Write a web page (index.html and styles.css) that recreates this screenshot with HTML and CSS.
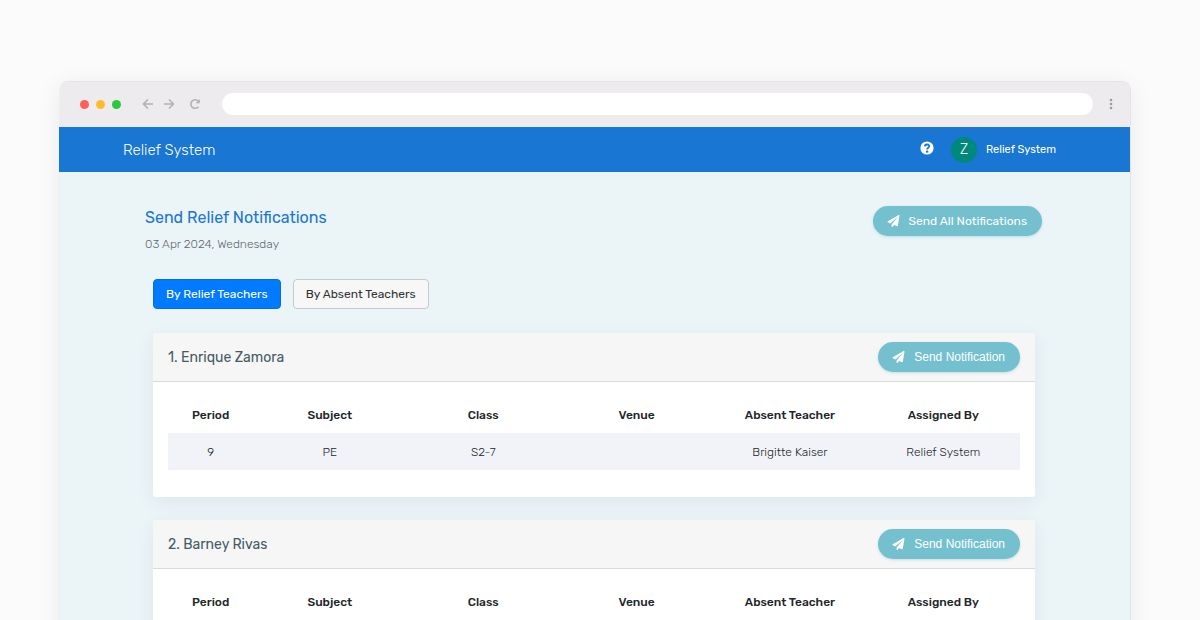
FILE: index.html
```html
<!DOCTYPE html>
<html lang="en">
<head>
<meta charset="utf-8">
<meta name="viewport" content="width=device-width, initial-scale=1">
<title>Relief System</title>
<link rel="stylesheet" href="styles.css">
</head>
<body>
<svg class="symbols" aria-hidden="true">
  <symbol id="plane" viewBox="0 0 512 512"><path fill="currentColor" d="M476 3.200 12.500 270.600c-18.100 10.400-15.800 35.600 2.200 43.200L121 358.400l287.300-253.200c5.500-4.900 13.300 2.600 8.600 8.300L176 407v80.500c0 23.600 28.500 32.900 42.500 15.800L282 426l124.600 52.200c14.200 6 30.400-2.900 33-18.200l72-432C515 7.800 493.300-6.800 476 3.200z"/></symbol>
</svg>
<div class="window">
  <div class="chrome">
    <div class="lights"><span class="light red"></span><span class="light yellow"></span><span class="light green"></span></div>
    <div class="controls">
      <button class="control" aria-label="Back"><svg viewBox="0 0 12 12"><path d="M11 6H2M6 1.500 1.500 6 6 10.500"/></svg></button>
      <button class="control" aria-label="Forward"><svg viewBox="0 0 12 12"><path d="M1 6h9M6 1.500 10.500 6 6 10.500"/></svg></button>
      <button class="control reload" aria-label="Reload"><svg viewBox="0 0 12 12"><path d="M9.500 8.700A4.300 4.300 0 1 1 9.200 3"/><path class="solid" d="M10.800 1v4.200H6.600z"/></svg></button>
    </div>
    <input class="address" type="text" aria-label="Address">
    <button class="menu" aria-label="Menu"><svg viewBox="0 0 4 12"><circle cx="2" cy="2" r="1.300"/><circle cx="2" cy="6" r="1.300"/><circle cx="2" cy="10" r="1.300"/></svg></button>
  </div>
  <header class="navbar">
    <a class="brand" href="#">Relief System</a>
    <div class="account">
      <a class="help" href="#" aria-label="Help"><svg viewBox="0 0 14 14"><circle cx="7" cy="7" r="6.600" fill="#fff"/><path d="M4.800 5.400C5 2.900 9.400 2.900 9.300 5.300 9.200 6.800 7.100 6.700 7.100 8.500" fill="none" stroke="#1976d2" stroke-width="1.800"/><circle cx="7.100" cy="10.600" r="1.200" fill="#1976d2"/></svg></a>
      <span class="avatar">Z</span>
      <span class="user">Relief System</span>
    </div>
  </header>
  <main class="content">
    <div class="heading">
      <div>
        <h1 class="title">Send Relief Notifications</h1>
        <p class="date">03 Apr 2024, Wednesday</p>
      </div>
      <button class="send send-all"><svg><use href="#plane"/></svg>Send All Notifications</button>
    </div>
    <div class="tabs">
      <button class="tab active">By Relief Teachers</button>
      <button class="tab">By Absent Teachers</button>
    </div>
    <section class="card">
      <div class="card-head">
        <h2 class="name">1. Enrique Zamora</h2>
        <button class="send"><svg><use href="#plane"/></svg>Send Notification</button>
      </div>
      <div class="card-body">
        <table class="table">
          <thead><tr><th class="narrow">Period</th><th>Subject</th><th>Class</th><th>Venue</th><th>Absent Teacher</th><th>Assigned By</th></tr></thead>
          <tbody><tr><td>9</td><td>PE</td><td>S2-7</td><td></td><td>Brigitte Kaiser</td><td>Relief System</td></tr></tbody>
        </table>
      </div>
    </section>
    <section class="card">
      <div class="card-head">
        <h2 class="name">2. Barney Rivas</h2>
        <button class="send"><svg><use href="#plane"/></svg>Send Notification</button>
      </div>
      <div class="card-body">
        <table class="table">
          <thead><tr><th class="narrow">Period</th><th>Subject</th><th>Class</th><th>Venue</th><th>Absent Teacher</th><th>Assigned By</th></tr></thead>
        </table>
      </div>
    </section>
  </main>
</div>
</body>
</html>
```
FILE: styles.css
```css
* { box-sizing: border-box; }
body {
  margin: 0;
  height: 100vh;
  overflow: hidden;
  padding: 81px 69px 0 59px;
  background: #fbfbfb;
  font-family: Rubik, Roboto, sans-serif;
  font-size: 13px;
  font-weight: 300;
  color: #212529;
}
button { font: inherit; cursor: pointer; }
a { color: inherit; text-decoration: none; }
.symbols { display: none; }
.window {
  border: 1px solid #e4e3e5;
  border-left-color: #edf0f2;
  border-bottom: 0;
  border-radius: 9px 9px 0 0;
  background: #ebf4f7;
  box-shadow: 0 4px 24px rgba(0, 0, 0, 0.07);
}
.chrome {
  display: flex;
  align-items: center;
  height: 45px;
  padding: 0 17px 1px 20px;
  border-radius: 8px 8px 0 0;
  background: #eeebee;
}
.lights { display: flex; gap: 7px; }
.light { width: 9px; height: 9px; border-radius: 50%; }
.red { background: #ff5f57; }
.yellow { background: #febc2e; }
.green { background: #28c840; }
.controls { display: flex; gap: 9px; margin-left: 21px; }
.control, .menu { display: flex; padding: 0; border: 0; background: none; }
.control svg { width: 12px; height: 12px; fill: none; stroke: #b3b1b3; stroke-width: 1.6; }
.control .solid { fill: #b3b1b3; stroke: none; }
.reload { margin-left: 5px; }
.address {
  flex: 1;
  min-width: 0;
  height: 22px;
  margin: 0 16px 0 21px;
  padding: 0 12px;
  border: 0;
  border-radius: 11px;
  background: #fff;
}
.menu svg { width: 4px; height: 12px; fill: #9b999b; }
.navbar {
  display: flex;
  align-items: center;
  justify-content: space-between;
  height: 45px;
  margin-left: -1px;
  padding: 0 74px 0 64px;
  background: #1976d2;
  color: #fff;
}
.brand { font-size: 15px; }
.account { display: flex; align-items: center; font-size: 11px; font-weight: 400; }
.help { padding-bottom: 3px; }
.help svg { display: block; width: 14px; height: 14px; }
.avatar {
  width: 26px;
  margin: 0 9px 0 17px;
  border-radius: 50%;
  background: #00897b;
  font-size: 14px;
  font-weight: 300;
  line-height: 26px;
  text-align: center;
}
.content { padding: 34px 95px 30px 93px; }
.heading {
  display: flex;
  align-items: flex-start;
  justify-content: space-between;
  margin: 0 -7px 0 -8px;
}
.title { margin: 0; font-size: 16px; line-height: 24px; font-weight: 400; color: #1976d2; }
.date { margin: 5px 0 0; font-size: 12px; line-height: 18px; color: #5f676e; }
.send {
  display: flex;
  align-items: center;
  gap: 9px;
  height: 30px;
  padding: 0 15px 0 14px;
  border: 0;
  border-radius: 15px;
  background: #74c0ce;
  color: #fff;
  font-family: "Liberation Sans", Arial, sans-serif;
  font-size: 12px;
  font-weight: 400;
  white-space: nowrap;
  box-shadow: 0 1px 3px rgba(116, 192, 206, 0.4);
}
.send svg { width: 13px; height: 12px; }
.send-all { font-family: Rubik, Roboto, sans-serif; }
.tabs { display: flex; gap: 12px; margin: 26px 0 24px; }
.tab {
  height: 30px;
  padding: 0 12px;
  border: 1px solid #c8c9cc;
  border-radius: 4px;
  background: #f7f7f7;
  color: #333;
  font-size: 12px;
  font-weight: 400;
}
.active { border-color: #006fe6; background: #007bff; color: #fff; }
.card {
  margin-bottom: 23px;
  border-radius: 3px;
  background: #fff;
  box-shadow: 0 5px 18px rgba(60, 90, 110, 0.07);
}
.card-head {
  display: flex;
  align-items: center;
  justify-content: space-between;
  height: 49px;
  padding: 0 15px;
  border-bottom: 1px solid #d9dadc;
  border-radius: 3px 3px 0 0;
  background: #f6f6f6;
}
.name { margin: 0; font-size: 14px; font-weight: 400; color: #455a64; }
.card-body { padding: 14px 15px 27px; }
.table { width: 100%; table-layout: fixed; border-collapse: collapse; font-size: 12px; text-align: center; }
.table th, .table td { height: 37px; padding: 0; }
.table th { font-weight: 500; }
.narrow { width: 10%; }
.table tbody tr { background: #f2f3f8; }
```
